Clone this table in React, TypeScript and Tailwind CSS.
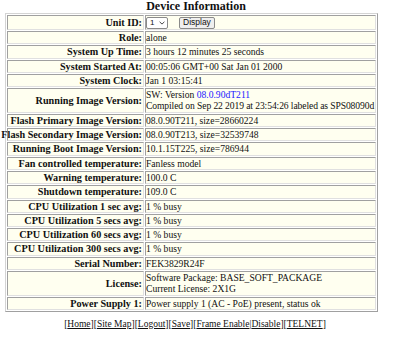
import React from "react";

type Row = { label: string; value: React.ReactNode };

const rows: Row[] = [
  { label: "Role:", value: "alone" },
  { label: "System Up Time:", value: "3 hours 12 minutes 25 seconds" },
  { label: "System Started At:", value: "00:05:06 GMT+00 Sat Jan 01 2000" },
  { label: "System Clock:", value: "Jan 1 03:15:41" },
  {
    label: "Running Image Version:",
    value: (
      <>
        <div>
          SW: Version <span className="text-[#1a1aff]">08.0.90dT211</span>
        </div>
        <div className="tracking-[-0.1px]">Compiled on Sep 22 2019 at 23:54:26 labeled as SPS08090d</div>
      </>
    ),
  },
  { label: "Flash Primary Image Version:", value: "08.0.90T211, size=28660224" },
  { label: "Flash Secondary Image Version:", value: "08.0.90T213, size=32539748" },
  { label: "Running Boot Image Version:", value: "10.1.15T225, size=786944" },
  { label: "Fan controlled temperature:", value: "Fanless model" },
  { label: "Warning temperature:", value: "100.0 C" },
  { label: "Shutdown temperature:", value: "109.0 C" },
  { label: "CPU Utilization 1 sec avg:", value: "1 % busy" },
  { label: "CPU Utilization 5 secs avg:", value: "1 % busy" },
  { label: "CPU Utilization 60 secs avg:", value: "1 % busy" },
  { label: "CPU Utilization 300 secs avg:", value: "1 % busy" },
  { label: "Serial Number:", value: "FEK3829R24F" },
  {
    label: "License:",
    value: (
      <>
        <div>Software Package: BASE_SOFT_PACKAGE</div>
        <div>Current License: 2X1G</div>
      </>
    ),
  },
  { label: "Power Supply 1:", value: "Power supply 1 (AC - PoE) present, status ok" },
];

const cell =
  "border border-t-[#a0a0a0] border-l-[#a0a0a0] border-b-[#e0e0e0] border-r-[#e0e0e0] bg-[#fffff0]";

const links = ["Home", "Site Map", "Logout", "Save"];

export default function App() {
  return (
    <div className="w-[400px] h-[342px] bg-white text-[#111] font-['Liberation_Serif',serif] overflow-hidden">
      {/* Title */}
      <div className="w-[392px] text-center text-[12px] font-bold leading-[13px]">
        Device Information
      </div>

      {/* Info table */}
      <div className="ml-[5px] w-[373px] grid grid-cols-[137px_231px] gap-px p-px border border-t-[#d4d4d4] border-l-[#d4d4d4] border-r-[#a0a0a0] border-b-[#a0a0a0] bg-white text-[9.6px] leading-[11.3px]">
        {/* Unit ID */}
        <div className={`${cell} flex items-center justify-end pr-px text-[10.2px] font-bold whitespace-nowrap`}>
          Unit ID:
        </div>
        <div className={`${cell} flex items-center h-[15px]`}>
          <div className="flex items-center justify-between w-[22px] h-[12px] rounded-[2px] border border-[#8a8a8a] bg-white pl-[3px] pr-[2px] font-['Liberation_Sans',sans-serif] text-[8px] leading-none">
            <span>1</span>
            <svg width="6" height="4" viewBox="0 0 6 4" fill="none">
              <path d="M0.6 0.8 L3 3.1 L5.4 0.8" stroke="#333" strokeWidth="0.9" />
            </svg>
          </div>
          <div className="ml-[11px] h-[12px] px-[3px] flex items-center rounded-[2px] border border-[#8a8a8a] bg-[#efefef] font-['Liberation_Sans',sans-serif] text-[8.5px] leading-none">
            Display
          </div>
        </div>

        {rows.map((r) => (
          <React.Fragment key={r.label}>
            <div className={`${cell} flex items-center justify-end pr-px text-[10.2px] font-bold whitespace-nowrap`}>
              {r.label}
            </div>
            <div className={`${cell} whitespace-nowrap`}>{r.value}</div>
          </React.Fragment>
        ))}
      </div>

      {/* Footer links */}
      <div className="w-[390px] mt-[6px] text-center text-[9.5px] leading-[12px] whitespace-nowrap">
        {links.map((l) => (
          <span key={l}>
            [<span className="underline">{l}</span>]
          </span>
        ))}
        [<span className="underline">Frame Enable</span>|<span className="underline">Disable</span>]{"["}
        <span className="underline">TELNET</span>]
      </div>
    </div>
  );
}
